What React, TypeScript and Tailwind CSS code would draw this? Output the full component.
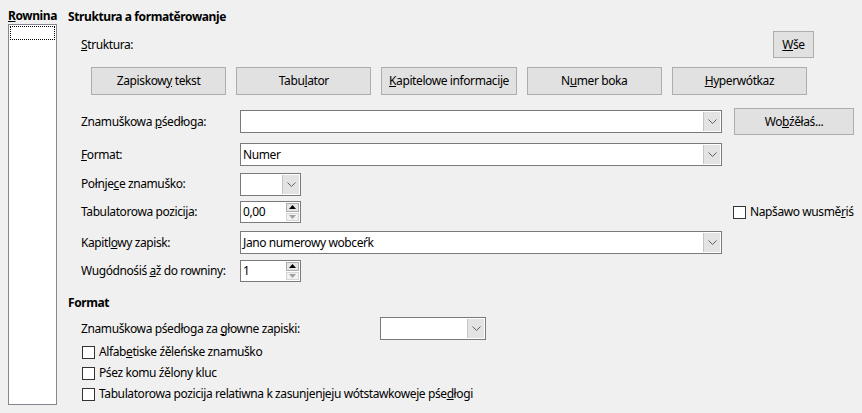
import React from 'react';

const Chevron = () => (
    <svg width="9" height="5" viewBox="0 0 9 5" className="block">
        <path d="M0.5 0.5 L4.5 4.5 L8.5 0.5" fill="none" stroke="#5f5f5f" strokeWidth="1" />
    </svg>
);

const Combo: React.FC<{ width: string; value?: string }> = ({ width, value }) => (
    <div className={`flex h-[23px] ${width} border border-[#7a7a7a] bg-white`}>
        <div className="flex-1 pl-[2px] leading-[21px]">{value}</div>
        <div className="flex w-[17px] items-center justify-center border-l border-[#c4c4c4] bg-[#e3e3e3] m-[1px] ml-0">
            <Chevron />
        </div>
    </div>
);

const Spin: React.FC<{ value: string }> = ({ value }) => (
    <div className="flex h-[22px] w-[61px] border border-[#7a7a7a] bg-white">
        <div className="flex-1 pl-[2px] leading-[20px]">{value}</div>
        <div className="flex w-[15px] flex-col gap-[1px] p-[1px]">
            <div className="flex flex-1 items-center justify-center border border-[#adadad] bg-[#e5e5e5]">
                <svg width="7" height="4" viewBox="0 0 7 4"><path d="M0 4 L3.5 0 L7 4 Z" fill="#000" /></svg>
            </div>
            <div className="flex flex-1 items-center justify-center border border-[#d6d6d6] bg-[#f2f2f2]">
                <svg width="7" height="4" viewBox="0 0 7 4"><path d="M0 0 L3.5 4 L7 0 Z" fill="#a0a0a0" /></svg>
            </div>
        </div>
    </div>
);

const Button: React.FC<{ className?: string; children: React.ReactNode }> = ({ className, children }) => (
    <div className={`flex items-center justify-center border border-[#adadad] bg-[#e1e1e1] ${className ?? ''}`}>
        {children}
    </div>
);

const Check: React.FC<{ children: React.ReactNode }> = ({ children }) => (
    <div className="flex items-center gap-[4px]">
        <div className="h-[13px] w-[13px] border border-[#333333] bg-white" />
        <span>{children}</span>
    </div>
);

const Row: React.FC<{ label: React.ReactNode; className?: string; children: React.ReactNode }> = ({ label, className, children }) => (
    <div className={`flex items-center ${className ?? ''}`}>
        <div className="w-[159px]">{label}</div>
        {children}
    </div>
);

export default function App() {
    return (
        <div className="flex h-[413px] w-[862px] bg-[#f0f0f0] pl-[8px] text-[12px] leading-[16px] tracking-[-0.4px] text-black" style={{ fontFamily: '"Noto Sans", sans-serif' }}>
            <div className="flex w-[49px] flex-col pt-[8px]">
                <div className="font-bold"><u>R</u>ownina</div>
                <div className="h-[381px] border border-[#828790] bg-white p-[1px]">
                    <div className="h-[14px] border border-dotted border-black" />
                </div>
            </div>

            <div className="ml-[11px] flex flex-col">
                <div className="mt-[9px] font-bold">Struktura a formatěrowanje</div>

                <div className="mt-[6px] ml-[13px] flex h-[27px] w-[733px] items-center justify-between">
                    <span><u>S</u>truktura:</span>
                    <Button className="h-[27px] w-[41px]"><span><u>W</u>še</span></Button>
                </div>

                <div className="mt-[9px] ml-[23px] flex h-[28px] w-[716px] gap-[10px]">
                    <Button className="flex-1"><span>Zapiskow<u>y</u> tekst</span></Button>
                    <Button className="flex-1"><span>Tabu<u>l</u>ator</span></Button>
                    <Button className="flex-1"><span><u>K</u>apitelowe informacije</span></Button>
                    <Button className="flex-1"><span>N<u>u</u>mer boka</span></Button>
                    <Button className="flex-1"><span><u>H</u>yperwótkaz</span></Button>
                </div>

                <div className="ml-[13px] flex flex-col">
                    <Row className="mt-[14px] h-[25px]" label={<span>Znamuškowa <u>p</u>śedłoga:</span>}>
                        <Combo width="w-[482px]" />
                        <Button className="ml-[12px] h-[27px] w-[120px]"><span>Wo<u>b</u>źěłaś...</span></Button>
                    </Row>
                    <Row className="mt-[9px] h-[23px]" label={<span><u>F</u>ormat:</span>}>
                        <Combo width="w-[482px]" value="Numer" />
                    </Row>
                    <Row className="mt-[6px] h-[24px]" label={<span>Połnje<u>c</u>e znamuško:</span>}>
                        <Combo width="w-[61px]" />
                    </Row>
                    <Row className="mt-[5px] h-[22px]" label={<span>Tabulatorowa pozici<u>j</u>a:</span>}>
                        <Spin value="0,00" />
                        <div className="ml-[432px]">
                            <Check>Napšawo wusmě<u>r</u>iś</Check>
                        </div>
                    </Row>
                    <Row className="mt-[8px] h-[23px]" label={<span>Kapitl<u>o</u>wy zapisk:</span>}>
                        <Combo width="w-[482px]" value="Jano numerowy wobceŕk" />
                    </Row>
                    <Row className="mt-[6px] h-[22px]" label={<span>Wugódnośiś <u>a</u>ž do rowniny:</span>}>
                        <Spin value="1" />
                    </Row>
                </div>

                <div className="mt-[13px] font-bold">Format</div>

                <div className="ml-[13px] flex flex-col">
                    <div className="mt-[6px] flex h-[23px] items-center">
                        <div className="w-[299px]">Znamuškowa pśedłoga za <u>g</u>łowne zapiski:</div>
                        <Combo width="w-[106px]" />
                    </div>
                    <div className="mt-[4px] ml-[1px] flex flex-col gap-[5px]">
                        <div className="h-[16px]"><Check>Alfab<u>e</u>tiske źěleńske znamuško</Check></div>
                        <div className="h-[16px]"><Check>Pśez komu źělony kluc</Check></div>
                        <div className="h-[16px]"><Check>Tabulatorowa pozicija relatiwna k zasunjenjeju wótstawkoweje pśe<u>d</u>łogi</Check></div>
                    </div>
                </div>
            </div>
        </div>
    );
}
